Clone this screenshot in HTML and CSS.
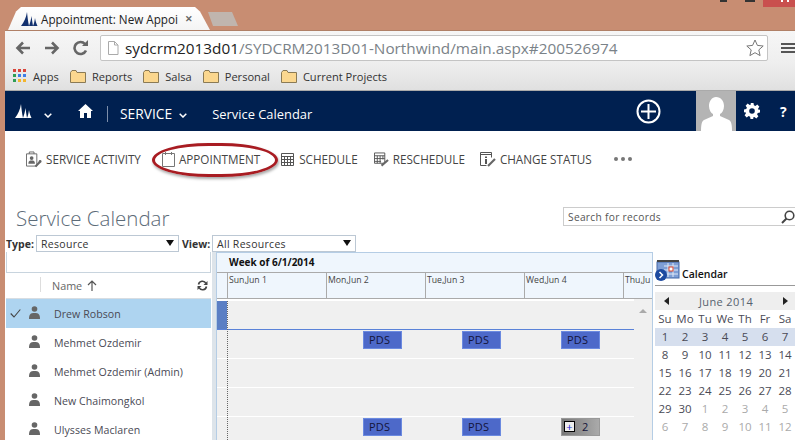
FILE: index.html
```html
<!DOCTYPE html>
<html lang="en">
<head>
    <meta charset="UTF-8">
    <title>Appointment: New Appointment</title>
    <link rel="stylesheet" href="styles.css">
</head>
<body>
    <!-- browser frame -->
    <div class="titlebar">
        <div class="tab">
            <svg width="17" height="14" viewBox="0 0 17 14"><path d="M0 14C3 10 5 6 6 0c.5 5 1 9 2 14zM8 14c1-3 2-6 2.500-10 .5 4 1 7 1.500 10zM12 14c1-2 1.500-5 2-8 .5 3 1.500 6 2.500 8z" fill="#12306e"/></svg>
            <span class="tab-title">Appointment: New Appoi</span>
            <span class="tab-close">✕</span>
        </div>
        <div class="tab-new"></div>
        <div class="win-btns"><i></i><i></i><b></b></div>
    </div>
    <div class="toolbar">
        <svg width="16" height="14" viewBox="0 0 16 14"><path d="M15 7H3M8 1.500 2.500 7 8 12.500" fill="none" stroke="#666" stroke-width="2.600"/></svg>
        <svg class="fwd" width="16" height="14" viewBox="0 0 16 14"><path d="M1 7h12M8 1.500 13.500 7 8 12.500" fill="none" stroke="#666" stroke-width="2.600"/></svg>
        <svg class="reload" width="16" height="16" viewBox="0 0 16 16"><path d="M13 10.500A6 6 0 1 1 12 4" fill="none" stroke="#666" stroke-width="2.600"/><path d="M9 6h6V0z" fill="#666"/></svg>
        <div class="urlbar">
            <svg width="12" height="14" viewBox="0 0 12 14"><path d="M1.500.5h6l3.500 3.500v9.500h-9.500zM7.500.5v3.500h3.500" fill="#fff" stroke="#aaa"/></svg>
            <span class="url"><span class="host">sydcrm2013d01</span>/SYDCRM2013D01-Northwind/main.aspx#200526974</span>
            <svg width="18" height="18" viewBox="0 0 18 18"><path d="m9 1 2.400 5.400 5.800.6-4.400 3.900 1.300 5.700L9 13.700l-5.100 2.900 1.300-5.700L.8 7l5.800-.6z" fill="#fff" stroke="#777"/></svg>
        </div>
        <div class="hamburger"><i></i><i></i><i></i></div>
    </div>
    <div class="bookmarks">
        <span class="bm">
            <svg class="apps" width="14" height="14" viewBox="0 0 14 14">
                <path fill="#d9453a" d="M0 0h3v3H0zM5 0h3v3H5zM10 0h3v3h-3z"/>
                <path fill="#3d7ee6" d="M5 5h3v3H5zM10 5h3v3h-3z"/>
                <path fill="#2f9e55" d="M0 5h3v3H0zM0 10h3v3H0z"/>
                <path fill="#f3b52e" d="M5 10h3v3H5zM10 10h3v3h-3z"/>
            </svg>Apps
        </span>
        <span class="bm"><svg class="folder" width="16" height="13" viewBox="0 0 16 13"><path d="M.5 2.500 2 .5h4l1 2h8.500v10H.5z" fill="#fbd78f" stroke="#8a7a55"/></svg>Reports</span>
        <span class="bm"><svg class="folder" width="16" height="13" viewBox="0 0 16 13"><path d="M.5 2.500 2 .5h4l1 2h8.500v10H.5z" fill="#fbd78f" stroke="#8a7a55"/></svg>Salsa</span>
        <span class="bm"><svg class="folder" width="16" height="13" viewBox="0 0 16 13"><path d="M.5 2.500 2 .5h4l1 2h8.500v10H.5z" fill="#fbd78f" stroke="#8a7a55"/></svg>Personal</span>
        <span class="bm"><svg class="folder" width="16" height="13" viewBox="0 0 16 13"><path d="M.5 2.500 2 .5h4l1 2h8.500v10H.5z" fill="#fbd78f" stroke="#8a7a55"/></svg>Current Projects</span>
    </div>

    <!-- CRM nav bar -->
    <div class="navbar">
        <svg class="nav-logo" width="17" height="14" viewBox="0 0 17 14"><path d="M0 14C3 10 5 6 6 0c.5 5 1 9 2 14zM8 14c1-3 2-6 2.500-10 .5 4 1 7 1.500 10zM12 14c1-2 1.500-5 2-8 .5 3 1.500 6 2.500 8z" fill="#fff"/></svg>
        <svg class="chev-a" width="8" height="5" viewBox="0 0 8 5"><path d="M.7.7 4 4 7.300.7" fill="none" stroke="#fff" stroke-width="1.500"/></svg>
        <svg class="home" width="15" height="14" viewBox="0 0 15 14"><path d="M7.500 0 15 7h-2v7H9V9H6v5H2V7H0z" fill="#fff"/></svg>
        <i class="nav-sep"></i>
        <span class="nav-service">SERVICE</span>
        <svg class="chev-b" width="8" height="5" viewBox="0 0 8 5"><path d="M.7.7 4 4 7.300.7" fill="none" stroke="#fff" stroke-width="1.500"/></svg>
        <span class="nav-page">Service Calendar</span>
        <svg class="nav-plus" width="25" height="25" viewBox="0 0 25 25"><circle cx="12.500" cy="12.500" r="11" fill="none" stroke="#fff" stroke-width="2"/><path d="M12.500 5v15M5 12.500h15" stroke="#fff" stroke-width="2"/></svg>
        <div class="avatar"><svg width="40" height="40" viewBox="0 0 40 40"><path d="M20 6c5 0 8 4 8 9 0 4-2 7-4 8v2l9 4c2 1 3 4 3 11H5c0-7 1-10 3-11l9-4v-2c-2-1-4-4-4-8 0-5 3-9 7-9z" fill="#fff"/></svg></div>
        <svg class="gear" width="16" height="16" viewBox="0 0 16 16"><path d="M6.500 0h3l.4 2.300 1.500.6 1.900-1.300 2.100 2.100-1.300 1.900.6 1.500L16 6.500v3l-2.300.4-.6 1.500 1.300 1.900-2.100 2.100-1.900-1.300-1.500.6L9.500 16h-3l-.4-2.300-1.500-.6-1.900 1.300-2.100-2.100 1.300-1.900-.6-1.500L0 9.500v-3l2.300-.4.6-1.500-1.300-1.900 2.100-2.100 1.900 1.300 1.500-.6z" fill="#fff"/><circle cx="8" cy="8" r="2.800" fill="#002050"/></svg>
        <span class="help">?</span>
    </div>

    <!-- command bar -->
    <div class="commands">
        <span class="cmd cmd-first">
            <svg width="16" height="17" viewBox="0 0 17 17"><path d="M.5 2.500h11v13H.5zM3.500 2.500V.5h5v2" fill="none" stroke="#666"/><circle cx="6" cy="7" r="2" fill="#666"/><path d="M2.500 13c0-3 1.500-3.500 3.500-3.500s3.500.5 3.500 3.500z" fill="#666"/><path d="m10 16 5-5" stroke="#666" stroke-width="2.200"/><circle cx="15" cy="10.500" r="1.500" fill="#666"/></svg>
            SERVICE ACTIVITY
        </span>
        <span class="cmd cmd-appt">
            <svg width="13" height="16" viewBox="0 0 13 16"><path d="M.5 2.500h12v13H.5zM3.500 1v3M9.500 1v3" fill="none" stroke="#777"/></svg>
            APPOINTMENT
        </span>
        <span class="cmd cmd-sched">
            <svg width="14" height="13" viewBox="0 0 14 13"><path d="M.5.5h12v12H.5zM.5 3.500h12M.5 6.500h12M.5 9.500h12M3.500 3.500v9M6.500 3.500v9M9.500 3.500v9" fill="none" stroke="#555"/></svg>
            SCHEDULE
        </span>
        <span class="cmd cmd-resched">
            <svg width="15" height="15" viewBox="0 0 16 15"><path d="M.5.5h11v11H.5zM.5 3.500h11M.5 6.500h11M.5 9.500h7M3.500 3.500v8M6.500 3.500v8M9.500 3.500v4" fill="none" stroke="#555"/><path d="m8 14 7-6" stroke="#666" stroke-width="2.200"/></svg>
            RESCHEDULE
        </span>
        <span class="cmd cmd-status">
            <svg width="16" height="16" viewBox="0 0 16 16"><path d="M.5 1.500h11v5M.5 1.500v13h6M.5 3.500h11" fill="none" stroke="#555"/><path d="M5 5.500h2V7H5zM5 8h2v5H5z" fill="#555"/><path d="m8 15 7-7" stroke="#666" stroke-width="2.200"/></svg>
            CHANGE STATUS
        </span>
        <span class="cmd-more"><i></i><i></i><i></i></span>
    </div>
    <div class="oval"></div>

    <div class="title-row">
        <h1>Service Calendar</h1>
        <div class="search">
            <span>Search for records</span>
            <svg width="14" height="14" viewBox="0 0 14 14"><circle cx="8.500" cy="5.500" r="4.300" fill="none" stroke="#444" stroke-width="1.600"/><path d="M5.500 8.500 1 13" stroke="#444" stroke-width="2"/></svg>
        </div>
    </div>

    <div class="filter-row">
        <label>Type:</label>
        <div class="pick pick-type">Resource<i></i></div>
        <label class="lbl-view">View:</label>
        <div class="pick pick-view">All Resources<i></i></div>
    </div>

    <div class="main">
        <!-- resource list -->
        <div class="resources">
            <div class="res-filter"></div>
            <div class="res-head">
                <i class="res-sep"></i>
                <span>Name</span>
                <svg class="sort" width="10" height="11" viewBox="0 0 10 11"><path d="M5 11V1M1 5l4-4 4 4" fill="none" stroke="#555" stroke-width="1.200"/></svg>
                <svg class="refresh" width="11" height="11" viewBox="0 0 11 11"><path d="M1.500 4.500A4 4 0 0 1 9 3.500M9.500 6.500A4 4 0 0 1 2 7.500" fill="none" stroke="#444" stroke-width="1.600"/><path d="M10.500 1v4h-4zM.5 10V6h4z" fill="#444"/></svg>
            </div>
            <div class="res-row selected">
                <svg class="tick" width="11" height="9" viewBox="0 0 11 9"><path d="m.7 4.500 3.300 3.500 6.300-7.500" fill="none" stroke="#444" stroke-width="1.100"/></svg>
                <svg class="person" width="11" height="13" viewBox="0 0 11 13"><circle cx="5.500" cy="3" r="2.800" fill="#666"/><path d="M0 13c0-5 1.500-6 5.500-6s5.500 1 5.500 6z" fill="#666"/></svg>
                <span>Drew Robson</span>
            </div>
            <div class="res-row">
                <svg class="person" width="11" height="13" viewBox="0 0 11 13"><circle cx="5.500" cy="3" r="2.800" fill="#666"/><path d="M0 13c0-5 1.500-6 5.500-6s5.500 1 5.500 6z" fill="#666"/></svg>
                <span>Mehmet Ozdemir</span>
            </div>
            <div class="res-row">
                <svg class="person" width="11" height="13" viewBox="0 0 11 13"><circle cx="5.500" cy="3" r="2.800" fill="#666"/><path d="M0 13c0-5 1.500-6 5.500-6s5.500 1 5.500 6z" fill="#666"/></svg>
                <span>Mehmet Ozdemir (Admin)</span>
            </div>
            <div class="res-row">
                <svg class="person" width="11" height="13" viewBox="0 0 11 13"><circle cx="5.500" cy="3" r="2.800" fill="#666"/><path d="M0 13c0-5 1.500-6 5.500-6s5.500 1 5.500 6z" fill="#666"/></svg>
                <span>New Chaimongkol</span>
            </div>
            <div class="res-row">
                <svg class="person" width="11" height="13" viewBox="0 0 11 13"><circle cx="5.500" cy="3" r="2.800" fill="#666"/><path d="M0 13c0-5 1.500-6 5.500-6s5.500 1 5.500 6z" fill="#666"/></svg>
                <span>Ulysses Maclaren</span>
            </div>
        </div>

        <!-- schedule -->
        <div class="schedule">
            <div class="week-label">Week of 6/1/2014</div>
            <div class="days">
                <span>Sun,Jun 1</span>
                <span>Mon,Jun 2</span>
                <span>Tue,Jun 3</span>
                <span>Wed,Jun 4</span>
                <span>Thu,Ju</span>
            </div>
            <div class="lanes">
                <div class="lane lane-first"><i class="lane-mark"></i></div>
                <div class="lane">
                    <i></i><span></span>
                    <span><b class="ev">PDS</b></span>
                    <span><b class="ev">PDS</b></span>
                    <span><b class="ev">PDS</b></span>
                </div>
                <div class="lane"></div>
                <div class="lane"></div>
                <div class="lane">
                    <i></i><span></span>
                    <span><b class="ev">PDS</b></span>
                    <span><b class="ev">PDS</b></span>
                    <span><b class="ev ev-more"><u>+</u>2</b></span>
                </div>
                <div class="scroller"></div>
            </div>
        </div>

        <!-- mini calendar -->
        <div class="side">
            <div class="side-head">
                <svg width="25" height="21" viewBox="0 0 25 21">
                    <rect x="2" y="2" width="22" height="16" fill="#7f9fd6" stroke="#4468a8"/>
                    <path d="M2 0h22v2H2z" fill="#444"/>
                    <path d="M9 6h14M9 10h14M9 14h14M13 3v14M18 3v14" stroke="#dfe9f7"/>
                    <rect x="14" y="7" width="4" height="4" fill="#fff" stroke="#d6402a"/>
                    <circle cx="6" cy="15" r="6" fill="#1d4aa0"/>
                    <path d="m4.500 12 3 3-3 3" fill="none" stroke="#fff" stroke-width="1.500"/>
                </svg>
                <span>Calendar</span>
            </div>
            <div class="side-rule"></div>
            <div class="month">
                <i class="arr-l"></i><span>June 2014</span><i class="arr-r"></i>
            </div>
            <div class="cal-grid">
                <b>Su</b><b>Mo</b><b>Tu</b><b>We</b><b>Th</b><b>Fr</b><b>Sa</b>
                <span class="wk">1</span><span class="wk">2</span><span class="wk">3</span><span class="wk">4</span><span class="wk">5</span><span class="wk">6</span><span class="wk">7</span>
                <span>8</span><span>9</span><span>10</span><span>11</span><span>12</span><span>13</span><span>14</span>
                <span>15</span><span>16</span><span>17</span><span>18</span><span>19</span><span>20</span><span>21</span>
                <span>22</span><span>23</span><span>24</span><span>25</span><span>26</span><span>27</span><span>28</span>
                <span>29</span><span>30</span><span class="off">1</span><span class="off">2</span><span class="off">3</span><span class="off">4</span><span class="off">5</span>
                <span class="off">6</span><span class="off">7</span><span class="off">8</span><span class="off">9</span><span class="off">10</span><span class="off">11</span><span class="off">12</span>
            </div>
        </div>
    </div>
</body>
</html>
```

FILE: styles.css
```css
html, body {
    margin: 0;
    height: 440px;
    overflow: hidden;
}
body {
    position: relative;
    width: 795px;
    background: #fff;
    font-family: "Open Sans", "Noto Sans", sans-serif;
    border-left: 5px solid #c88d72;
    box-sizing: border-box;
    color: #444;
}
i, b, u {
    font-style: normal;
    text-decoration: none;
}

/* browser frame */
.titlebar {
    position: relative;
    height: 30px;
    margin-left: -5px;
    background: #c88d72;
    display: flex;
    align-items: flex-end;
    padding-left: 8px;
    border-bottom: 1px solid #b08067;
}
.tab {
    width: 202px;
    height: 23px;
    box-sizing: border-box;
    padding: 0 17px 0 13px;
    display: flex;
    align-items: center;
    background: linear-gradient(#fff, #f4f4f4);
    clip-path: polygon(0 100%, 8px 20%, 13px 0, 187px 0, 192px 20%, 202px 100%);
    color: #222;
    font-size: 11.700px;
}
.tab-title {
    margin-left: 3px;
    white-space: nowrap;
}
.tab-close {
    margin-left: auto;
    font-size: 9px;
    font-weight: 700;
    color: #666;
}
.tab-new {
    width: 30px;
    height: 14px;
    margin: 0 0 4px -2px;
    background: #c0b5ae;
    clip-path: polygon(0 0, 24px 0, 30px 100%, 5px 100%);
}
.win-btns {
    position: absolute;
    top: 0;
    right: 0;
    display: flex;
    align-items: flex-start;
}
.win-btns i {
    width: 7px;
    height: 2px;
    margin-right: 18px;
    background: #333;
}
.win-btns i + i {
    width: 10px;
    margin-right: 8px;
}
.win-btns b {
    width: 32px;
    height: 7px;
    background: #c9504e;
}
.win-btns b::after {
    content: "";
    position: absolute;
    top: 0;
    right: 6px;
    width: 4px;
    height: 2px;
    border-left: 2px solid #fff;
    border-right: 2px solid #fff;
}
.toolbar {
    height: 33px;
    display: flex;
    align-items: center;
    padding-left: 10px;
    background: linear-gradient(#f6f6f6, #eeeeee);
}
.fwd {
    margin-left: 13px;
}
.reload {
    margin-left: 13px;
}
.urlbar {
    width: 668px;
    height: 26px;
    margin-left: 11px;
    flex: none;
    box-sizing: border-box;
    padding: 0 3px 0 6px;
    display: flex;
    align-items: center;
    background: #fff;
    border: 1px solid #c4c4c4;
    border-radius: 2px;
    font-size: 15.300px;
    color: #7a8288;
}
.url {
    margin-left: 6px;
    flex: 1;
    white-space: nowrap;
}
.host {
    color: #222;
}
.hamburger {
    margin-left: 13px;
    flex: none;
}
.hamburger i {
    display: block;
    width: 14px;
    height: 2px;
    margin: 2px 0;
    background: #555;
}
.bookmarks {
    height: 27px;
    display: flex;
    align-items: center;
    padding: 0 0 2px 8px;
    background: linear-gradient(#eeeeee, #e0e0e0);
    border-bottom: 1px solid #aaa;
    font-size: 11.100px;
    color: #333;
    box-sizing: border-box;
}
.bm {
    display: flex;
    align-items: center;
    margin-right: 11px;
}
.apps {
    margin-right: 6px;
}
.folder {
    margin-right: 6px;
}

/* nav bar */
.navbar {
    position: relative;
    height: 40px;
    display: flex;
    align-items: center;
    background: #002050;
    color: #fff;
    padding-left: 10px;
    font-size: 13.800px;
}
.chev-a {
    margin: 8px 0 0 12px;
}
.home {
    margin-left: 26px;
}
.nav-sep {
    width: 1px;
    height: 16px;
    margin: 6px 0 0 14px;
    background: #7d8eaa;
}
.nav-service {
    margin: 5px 0 0 12px;
}
.chev-b {
    margin: 8px 0 0 7px;
}
.nav-page {
    margin: 5px 0 0 25px;
    font-size: 12.900px;
}
.nav-plus {
    margin-left: auto;
    margin-right: 35px;
}
.avatar {
    width: 40px;
    height: 40px;
    background: #b4b4b4;
}
.gear {
    margin-left: 8px;
}
.help {
    margin-left: 20px;
    width: 15px;
    font-size: 14px;
    font-weight: 700;
}

/* command bar */
.commands {
    height: 58px;
    display: flex;
    align-items: center;
    padding-bottom: 2px;
    box-sizing: border-box;
    font-size: 11.700px;
    color: #444;
}
.cmd {
    display: flex;
    align-items: center;
    gap: 4px;
    white-space: nowrap;
}
.cmd-first {
    margin-left: 21px;
}
.cmd-appt {
    margin-left: 21px;
}
.cmd-sched {
    margin-left: 21px;
}
.cmd-resched {
    margin-left: 16px;
}
.cmd-status {
    margin-left: 15px;
}
.cmd-more {
    display: flex;
    gap: 3px;
    margin-left: 22px;
}
.cmd-more i {
    width: 4px;
    height: 4px;
    border-radius: 50%;
    background: #777;
}
/* hand drawn highlight around the Appointment command */
.oval {
    position: absolute;
    left: 147px;
    top: 143px;
    width: 120px;
    height: 28px;
    border: 3px solid #a81c22;
    border-radius: 45% / 50%;
    box-shadow: 1px 2px 3px rgba(0, 0, 0, .35);
}

.title-row {
    height: 46px;
    display: flex;
    justify-content: space-between;
    align-items: flex-start;
    margin-left: 11px;
}
h1 {
    margin: 15px 0 0;
    font-size: 20.500px;
    font-weight: 300;
    color: #5c6b78;
}
.search {
    width: 232px;
    height: 19px;
    margin-top: 18px;
    box-sizing: border-box;
    display: flex;
    align-items: center;
    justify-content: space-between;
    border: 1px solid #ccc;
    border-right: 0;
    font-size: 10.200px;
    letter-spacing: .3px;
    color: #555;
    padding-left: 4px;
}
.filter-row {
    height: 17px;
    display: flex;
    align-items: center;
    font-size: 10.500px;
    color: #333;
    margin-left: 1px;
}
.filter-row label {
    font-weight: 700;
    width: 30px;
}
.filter-row .lbl-view {
    margin-left: 3px;
}
.pick {
    position: relative;
    box-sizing: border-box;
    height: 17px;
    line-height: 16px;
    padding-left: 4px;
    border: 1px solid #bcc8d4;
    letter-spacing: .3px;
}
.pick-type {
    width: 143px;
}
.pick-view {
    width: 144px;
}
.pick i {
    position: absolute;
    right: 4px;
    top: 4px;
    border: 4px solid transparent;
    border-top: 6px solid #111;
    border-bottom: 0;
}

.main {
    display: flex;
    height: 188px;
}

/* resource list */
.resources {
    width: 207px;
    flex: none;
}
.res-filter {
    height: 20px;
    margin: 0 1px;
    border: 1px solid #c8d4de;
    border-top: 0;
}
.res-head {
    position: relative;
    height: 25px;
    display: flex;
    align-items: center;
    padding-left: 46px;
    font-size: 10.800px;
    color: #666;
    border-bottom: 1px solid #d8dde2;
    margin: 0 1px;
}
.res-sep {
    position: absolute;
    left: 34px;
    top: 4px;
    width: 1px;
    height: 15px;
    background: #ddd;
}
.sort {
    margin-left: 5px;
}
.refresh {
    margin-left: auto;
    margin-right: 3px;
}
.res-row {
    height: 29px;
    display: flex;
    align-items: center;
    font-size: 10.600px;
    letter-spacing: .05px;
    color: #4a4a55;
    padding-left: 23px;
    margin: 0 1px;
    box-sizing: border-box;
}
.res-row.selected {
    background: #aed4f0;
    padding-left: 4px;
}
.res-row span {
    margin-left: 14px;
}
.tick {
    margin-right: 8px;
}
.person {
    margin-top: -3px;
}

/* schedule */
.schedule {
    width: 437px;
    flex: none;
    margin-left: 4px;
    border-left: 1px solid #b5cde5;
    border-right: 1px solid #b5cde5;
    box-sizing: border-box;
    background: #eff6fd;
    box-shadow: -4px 0 0 #dde4ea;
}
.week-label {
    height: 20px;
    padding-left: 12px;
    font-size: 10px;
    font-weight: 700;
    line-height: 18px;
    color: #111;
    border-top: 1px solid #b5cde5;
    box-sizing: border-box;
}
.days {
    height: 27px;
    display: grid;
    grid-template-columns: repeat(5, 99px);
    padding-left: 10px;
    border-bottom: 1px solid #aaa;
    border-top: 1px solid #aaa;
    box-sizing: border-box;
    font-size: 8.700px;
    color: #444;
    white-space: nowrap;
}
.days span {
    border-left: 1px solid #aaa;
    padding-left: 1px;
    line-height: 15px;
}
.lanes {
    position: relative;
    height: 141px;
    padding-top: 2px;
    background: #fff;
}
/* dotted line between the mark column and the first day */
.lanes::before {
    content: "";
    position: absolute;
    top: 2px;
    bottom: 0;
    left: 10px;
    border-left: 1px dotted #666;
    z-index: 1;
}
.lane {
    height: 28px;
    margin-bottom: 1px;
    background: #f0f0f0;
    display: grid;
    grid-template-columns: 10px repeat(4, 99px);
    width: 417px;
}
.lane-first {
    height: 29px;
    margin-bottom: 0;
    border-bottom: 1px solid #5a82d8;
    box-sizing: border-box;
}
.lane-mark {
    background: #5b7fc4;
}
.ev {
    display: flex;
    align-items: center;
    box-sizing: border-box;
    width: 39px;
    height: 18px;
    margin: 1px 0 0 37px;
    padding: 0 0 1px 5px;
    font-size: 11px;
    letter-spacing: .2px;
    font-weight: 400;
    color: #14143a;
    background: #4d69c9;
    border: 1px solid #6b8ae0;
}
.ev-more {
    background: linear-gradient(90deg, #777, #aaa);
    border-color: #999;
    padding-left: 2px;
    gap: 7px;
}
.ev-more u {
    width: 11px;
    height: 11px;
    line-height: 9px;
    font-size: 11px;
    text-align: center;
    color: #22c;
    background: #eee;
    border: 1px solid #000;
    box-sizing: border-box;
}
.scroller {
    position: absolute;
    top: 0;
    bottom: 0;
    left: 417px;
    width: 18px;
    background: #f0f0f0;
}
.scroller::after {
    content: "";
    position: absolute;
    top: 10px;
    left: 5px;
    border: 4px solid transparent;
    border-bottom: 4px solid #aaa;
    border-top: 0;
}

/* mini calendar */
.side {
    flex: 1;
    padding: 3px 0 0 2px;
    overflow: hidden;
}
.side-head {
    height: 26px;
    display: flex;
    align-items: flex-end;
    gap: 2px;
    font-size: 10.500px;
    font-weight: 600;
    color: #111;
}
.side-rule {
    height: 1px;
    margin-top: 4px;
    background: #999;
}
.month {
    height: 18px;
    margin-top: 6px;
    display: flex;
    align-items: center;
    justify-content: space-between;
    padding: 0 7px 0 9px;
    background: #eee;
    font-size: 11px;
    letter-spacing: .4px;
    color: #56626e;
}
.arr-l {
    border: 4px solid transparent;
    border-right: 5px solid #222;
    border-left: 0;
}
.arr-r {
    border: 4px solid transparent;
    border-left: 5px solid #222;
    border-right: 0;
}
.cal-grid {
    display: grid;
    grid-template-columns: repeat(7, 20px);
    grid-auto-rows: 18px;
    font-size: 11.500px;
    line-height: 18px;
    text-align: center;
    color: #4a4a55;
}
.cal-grid b {
    font-weight: 400;
}
.cal-grid .wk {
    background: #d6dfee;
}
.cal-grid .off {
    color: #aaa;
}
```
